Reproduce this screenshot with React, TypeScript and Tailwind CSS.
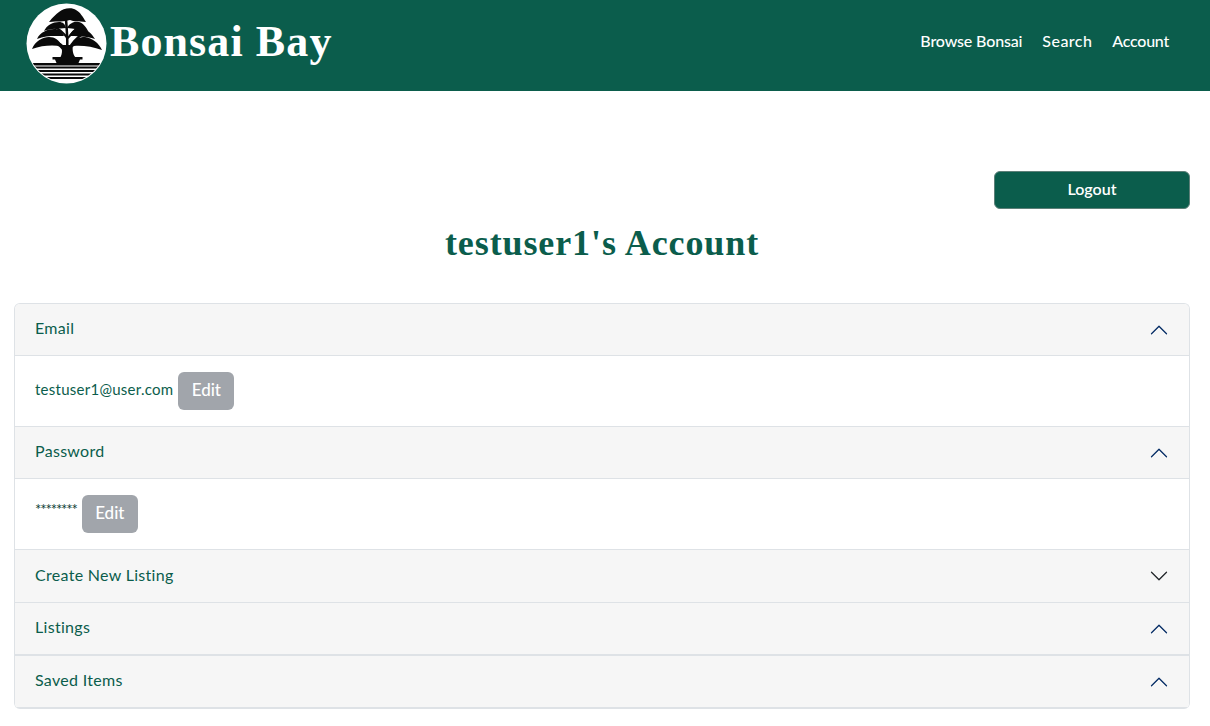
const body = '[font-family:"Lato","Noto_Sans",sans-serif]';

function Chevron({ up, dark }: { up?: boolean; dark?: boolean }) {
  return (
    <svg width="20" height="20" viewBox="0 0 16 16" fill={dark ? "#212529" : "#052c65"} className="shrink-0">
      {up ? (
        <path fillRule="evenodd" d="M1.646 11.354a.5.5 0 0 0 .708 0L8 5.707l5.646 5.647a.5.5 0 0 0 .708-.708l-6-6a.5.5 0 0 0-.708 0l-6 6a.5.5 0 0 0 0 .708z" />
      ) : (
        <path fillRule="evenodd" d="M1.646 4.646a.5.5 0 0 1 .708 0L8 10.293l5.646-5.647a.5.5 0 0 1 .708.708l-6 6a.5.5 0 0 1-.708 0l-6-6a.5.5 0 0 1 0-.708z" />
      )}
    </svg>
  );
}

function Logo() {
  const canopy = [
    "M23 19 C27 14 30 11 33 9 C37 5 46 4 50 7 C54 9 57 14 60 19 C52 18 48 19 44 17 C38 19 32 18 23 19Z",
    "M18 28 C21 22 27 19 33 19 C37 19 39 21 40 25 C33 26 26 25 18 28Z",
    "M41 25 C44 19 50 18 53 19 C57 20 60 24 62 28 C54 26 47 26 41 25Z",
    "M11 36 C14 29 22 26 28 26 C33 26 36 28 38 33 C30 33 20 32 11 36Z",
    "M43 33 C46 27 50 25 55 25 C61 26 66 31 69 36 C60 33 50 33 43 33Z",
    "M6 46 C9 38 17 34 23 34 C29 34 33 37 36 43 C26 42 16 42 6 46Z",
    "M45 43 C48 36 53 34 59 34 C66 35 73 40 76 47 C66 43 55 42 45 43Z",
  ];
  const branches: [string, number][] = [
    ["M39 50 C39 46 37 42 26 38", 3.5],
    ["M41 48 C42 40 41 30 40 16", 2.5],
    ["M43 46 C46 40 52 34 58 30", 2.5],
    ["M42 36 C38 30 34 26 28 24", 2],
    ["M42 35 C46 30 50 26 52 23", 2],
    ["M44 44 C50 40 56 38 62 38", 2.5],
  ];
  return (
    <svg width="81" height="81" viewBox="0 0 81 81" className="shrink-0">
      <circle cx="40.5" cy="40.5" r="40" fill="#fff" />
      {canopy.map((d) => (
        <path key={d} d={d} fill="#0a0a0a" />
      ))}
      {branches.map(([d, w]) => (
        <path key={d} d={d} fill="none" stroke="#0a0a0a" strokeWidth={w} />
      ))}
      <path d="M34 55 C37 50 36 46 35 42 L47 42 C46 47 47 52 50 55Z" fill="#0a0a0a" />
      <path d="M26.5 54 H56.5 V56.5 H54 L52.5 60 H30.5 L29 56.5 H26.5Z" fill="#0a0a0a" />
      <clipPath id="logo-clip"><circle cx="40.5" cy="40.5" r="39" /></clipPath>
      <g clipPath="url(#logo-clip)" fill="#0a0a0a">
        <rect x="0" y="60" width="81" height="2.5" />
        <rect x="0" y="63.5" width="81" height="2" />
        <rect x="0" y="67" width="81" height="2" />
        <rect x="0" y="70.5" width="81" height="2" />
        <rect x="0" y="74" width="81" height="2" />
      </g>
    </svg>
  );
}

function Row({ label, up = true, dark, tall, thick }: { label: string; up?: boolean; dark?: boolean; tall?: boolean; thick?: boolean }) {
  return (
    <div className={`flex items-center justify-between bg-[#f6f6f6] pl-5 pr-5 ${tall ? "h-[53px]" : "h-[52px]"} ${thick ? "border-b-2" : "border-b"} border-[#dee2e6]`}>
      <span className="pb-[3px] text-[16px] tracking-[0.3px] text-[#0b5d4c]">{label}</span>
      <Chevron up={up} dark={dark} />
    </div>
  );
}

function Body({ text, stars }: { text: string; stars?: boolean }) {
  return (
    <div className="flex h-[71px] items-center gap-[5px] border-b border-[#dee2e6] bg-white pl-5">
      <span className={stars ? "pb-[10px] text-[15px] tracking-[-1.15px] text-[#0a3d33]" : "pb-[4px] text-[15px] tracking-[0.26px] text-[#0b5d4c]"}>{text}</span>
      <button className="h-[38px] w-[56px] rounded-md bg-[#a1a5ab] pb-[2px] text-[17px] font-medium text-white">Edit</button>
    </div>
  );
}

export default function App() {
  return (
    <div className={`min-h-[726px] bg-white ${body}`}>
      <header className="flex h-[91px] items-center justify-between bg-[#0b5d4c] pl-[26px] pr-[41px]">
        <div className="flex items-center gap-[3px] pb-[5px]">
          <Logo />
          <span className='pb-[2px] text-[44px] font-bold tracking-[1.1px] text-white [font-family:"Liberation_Serif",serif]'>Bonsai Bay</span>
        </div>
        <nav className="flex gap-5 pb-[10px] text-[16px] font-medium text-white">
          <span className="tracking-[-0.15px]">Browse Bonsai</span>
          <span className="tracking-[0.45px]">Search</span>
          <span className="tracking-[-0.25px]">Account</span>
        </nav>
      </header>
      <main className="pl-[14px] pr-5">
        <div className="flex justify-end pt-20">
          <button className="h-[38px] w-[196px] rounded-md border border-[#5d7f78] bg-[#0b5d4c] pb-[3px] text-[16px] font-semibold text-white">Logout</button>
        </div>
        <h1 className='mt-[12px] h-[82px] text-center text-[36px] font-bold leading-[44px] tracking-[0.9px] text-[#0b5d4c] [font-family:"Liberation_Serif",serif]'>testuser1's Account</h1>
        <div className="overflow-hidden rounded-md border-x border-t border-[#dee2e6]">
          <Row label="Email" />
          <Body text="testuser1@user.com" />
          <Row label="Password" />
          <Body text="********" stars />
          <Row label="Create New Listing" up={false} dark tall />
          <Row label="Listings" tall thick />
          <Row label="Saved Items" tall thick />
        </div>
      </main>
    </div>
  );
}
